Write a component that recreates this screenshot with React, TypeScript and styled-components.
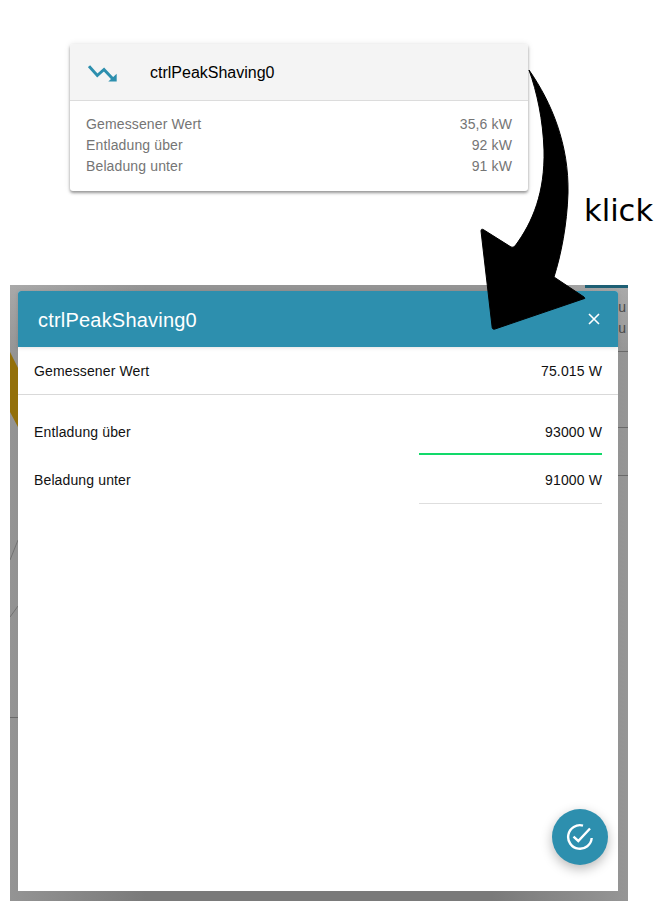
import React from "react";
import styled, { createGlobalStyle } from "styled-components";

const Global = createGlobalStyle`
  html, body { margin: 0; padding: 0; background: #fff; }
  body { font-family: "Liberation Sans", Arial, sans-serif; }
`;

const Page = styled.div`
  position: relative;
  width: 667px;
  height: 923px;
  overflow: hidden;
  padding: 44px 0 0 10px;
  box-sizing: border-box;
`;

const Card = styled.section`
  width: 458px;
  height: 147px;
  margin-left: 60px;
  box-sizing: border-box;
  background: #fff;
  border-radius: 3px;
  box-shadow: 0 2px 3px rgba(0, 0, 0, 0.38), 0 0 6px rgba(0, 0, 0, 0.1);
  overflow: hidden;
`;

const CardHead = styled.header`
  display: flex;
  align-items: center;
  height: 57px;
  box-sizing: border-box;
  padding: 1px 0 0 18px;
  background: #f4f4f4;
  border-bottom: 1px solid #dcdcdc;
`;

const CardIcon = styled.svg`
  width: 29px;
  height: 20px;
  margin-right: 33px;
  flex: none;
`;

const CardTitle = styled.span`
  font-size: 16px;
  color: #000;
`;

const CardBody = styled.div`
  padding: 13px 16px 0;
`;

const CardRow = styled.div`
  display: flex;
  justify-content: space-between;
  font-size: 14px;
  line-height: 21px;
  letter-spacing: 0.13px;
  color: #757575;
`;

const Backdrop = styled.div`
  position: relative;
  width: 618px;
  height: 616px;
  margin-top: 94px;
  padding: 6px 10px 10px 8px;
  box-sizing: border-box;
  background:
    linear-gradient(to bottom, rgba(255, 255, 255, 0.2), rgba(255, 255, 255, 0) 70px),
    linear-gradient(90deg, #949494 0%, #7a7a7a 22%, #7a7a7a 78%, #969696 100%);
  overflow: hidden;
`;

const TealTab = styled.i`
  position: absolute;
  top: 0;
  right: 0;
  width: 43px;
  height: 3px;
  background: #1d5f74;
`;

const BackdropArt = styled.svg`
  position: absolute;
  left: 0;
  top: 0;
  width: 8px;
  height: 616px;
`;

const BehindText = styled.span<{ $top: number }>`
  position: absolute;
  right: 2px;
  top: ${(p) => p.$top}px;
  font-size: 14px;
  line-height: 16px;
  color: #4a4a4a;
  white-space: nowrap;
`;

const BehindLine = styled.i<{ $top: number; $left?: boolean }>`
  position: absolute;
  ${(p) => (p.$left ? "left: 0;" : "right: 0;")}
  top: ${(p) => p.$top}px;
  width: ${(p) => (p.$left ? 8 : 10)}px;
  height: 1px;
  background: #6a6a6a;
`;

const Modal = styled.div`
  position: relative;
  display: flex;
  flex-direction: column;
  height: 600px;
  background: #fff;
  border-radius: 3px 3px 0 0;
`;

const ModalHead = styled.header`
  display: flex;
  align-items: center;
  justify-content: space-between;
  height: 56px;
  box-sizing: border-box;
  flex: none;
  padding: 0 17px 0 20px;
  background: #2d8fae;
  color: #fff;
  border-radius: 3px 3px 0 0;
  box-shadow: 0 1px 4px rgba(0, 0, 0, 0.12);
`;

const ModalTitle = styled.h2`
  margin: 0;
  padding-top: 2px;
  font-size: 20px;
  font-weight: 400;
  letter-spacing: 0.2px;
`;

const CloseIcon = styled.svg`
  width: 14px;
  height: 14px;
  display: block;
`;

const MeasureRow = styled.div`
  display: flex;
  align-items: center;
  justify-content: space-between;
  height: 48px;
  box-sizing: border-box;
  padding: 0 16px;
  border-bottom: 1px solid #d9d9d9;
  font-size: 14px;
  letter-spacing: 0.13px;
  color: #111;
`;

const Fields = styled.div`
  padding-top: 13px;
`;

const FieldRow = styled.div`
  display: flex;
  justify-content: space-between;
  height: 48px;
  padding: 0 16px;
  font-size: 14px;
  letter-spacing: 0.13px;
  color: #111;
`;

const FieldLabel = styled.span`
  line-height: 48px;
  height: 48px;
`;

const FieldInput = styled.div<{ $active?: boolean }>`
  width: 183px;
  height: ${(p) => (p.$active ? 45 : 47)}px;
  text-align: right;
  line-height: 48px;
  border-bottom: ${(p) => (p.$active ? "2px solid #12d96a" : "1px solid #dedede")};
`;

const Fab = styled.button`
  position: absolute;
  right: 10px;
  bottom: 26px;
  width: 56px;
  height: 56px;
  padding: 0;
  border: 0;
  border-radius: 50%;
  background: #2d8fae;
  display: flex;
  align-items: center;
  justify-content: center;
  box-shadow: 0 4px 12px rgba(0, 0, 0, 0.28);
`;

const FabIcon = styled.svg`
  width: 28px;
  height: 28px;
`;

const Arrow = styled.svg`
  position: absolute;
  left: 0;
  top: 0;
  width: 667px;
  height: 923px;
  pointer-events: none;
`;

const Klick = styled.span`
  position: absolute;
  left: 584px;
  top: 191px;
  font-family: "DejaVu Sans", sans-serif;
  font-size: 30.5px;
  line-height: 40px;
  color: #000;
`;

export default function App() {
  return (
    <Page>
      <Global />
      <Card>
        <CardHead>
          <CardIcon viewBox="0 0 29 20">
            <path d="M1 3.2 L9.3 12.5 L16 6.5 L24.7 15.8" fill="none" stroke="#2d8fae" strokeWidth="3" />
            <path d="M28.7 18.5 H20.3 L28.7 10.8 Z" fill="#2d8fae" />
          </CardIcon>
          <CardTitle>ctrlPeakShaving0</CardTitle>
        </CardHead>
        <CardBody>
          <CardRow><span>Gemessener Wert</span><span>35,6 kW</span></CardRow>
          <CardRow><span>Entladung über</span><span>92 kW</span></CardRow>
          <CardRow><span>Beladung unter</span><span>91 kW</span></CardRow>
        </CardBody>
      </Card>
      <Backdrop>
        <TealTab />
        <BackdropArt viewBox="0 0 8 616">
          <path d="M0 67 L8 83 V142 L0 127 Z" fill="#93700a" />
          <path d="M0 275 L8 255 M0 332 L8 321" stroke="#727272" strokeWidth="1" fill="none" />
        </BackdropArt>
        <BehindText $top={14}>u</BehindText>
        <BehindText $top={35}>du</BehindText>
        <BehindLine $top={66} />
        <BehindLine $top={142} />
        <BehindLine $top={190} />
        <BehindLine $left $top={432} />
        <Modal>
          <ModalHead>
            <ModalTitle>ctrlPeakShaving0</ModalTitle>
            <CloseIcon viewBox="0 0 14 14">
              <path d="M2 2 L12 12 M12 2 L2 12" stroke="#fff" strokeWidth="1.6" />
            </CloseIcon>
          </ModalHead>
          <MeasureRow><span>Gemessener Wert</span><span>75.015 W</span></MeasureRow>
          <Fields>
            <FieldRow>
              <FieldLabel>Entladung über</FieldLabel>
              <FieldInput $active>93000 W</FieldInput>
            </FieldRow>
            <FieldRow>
              <FieldLabel>Beladung unter</FieldLabel>
              <FieldInput>91000 W</FieldInput>
            </FieldRow>
          </Fields>
          <Fab aria-label="Speichern">
            <FabIcon viewBox="0 0 28 28" fill="none" stroke="#fff" strokeWidth="2.4">
              <path d="M25.7 15 A11.8 11.8 0 1 1 17 2.6" />
              <path d="M7.5 13.7 L12.3 18 L24 5.5" />
            </FabIcon>
          </Fab>
        </Modal>
      </Backdrop>
      <Arrow viewBox="0 0 667 923">
        <path
          d="M529 70 C552 103 569 145 568 193 C567 225 561 255 554 277 L584 297 Q586 299 583 299 L495 329 Q492 330 492 326 L481 231 Q481 228 484 230 L511 247 Q513 248 515 246 C533 222 545 192 544 150 C543 120 537 92 529 70 Z"
          fill="#000"
          stroke="#000"
          strokeWidth="1"
          strokeLinejoin="round"
        />
      </Arrow>
      <Klick>klick</Klick>
    </Page>
  );
}
